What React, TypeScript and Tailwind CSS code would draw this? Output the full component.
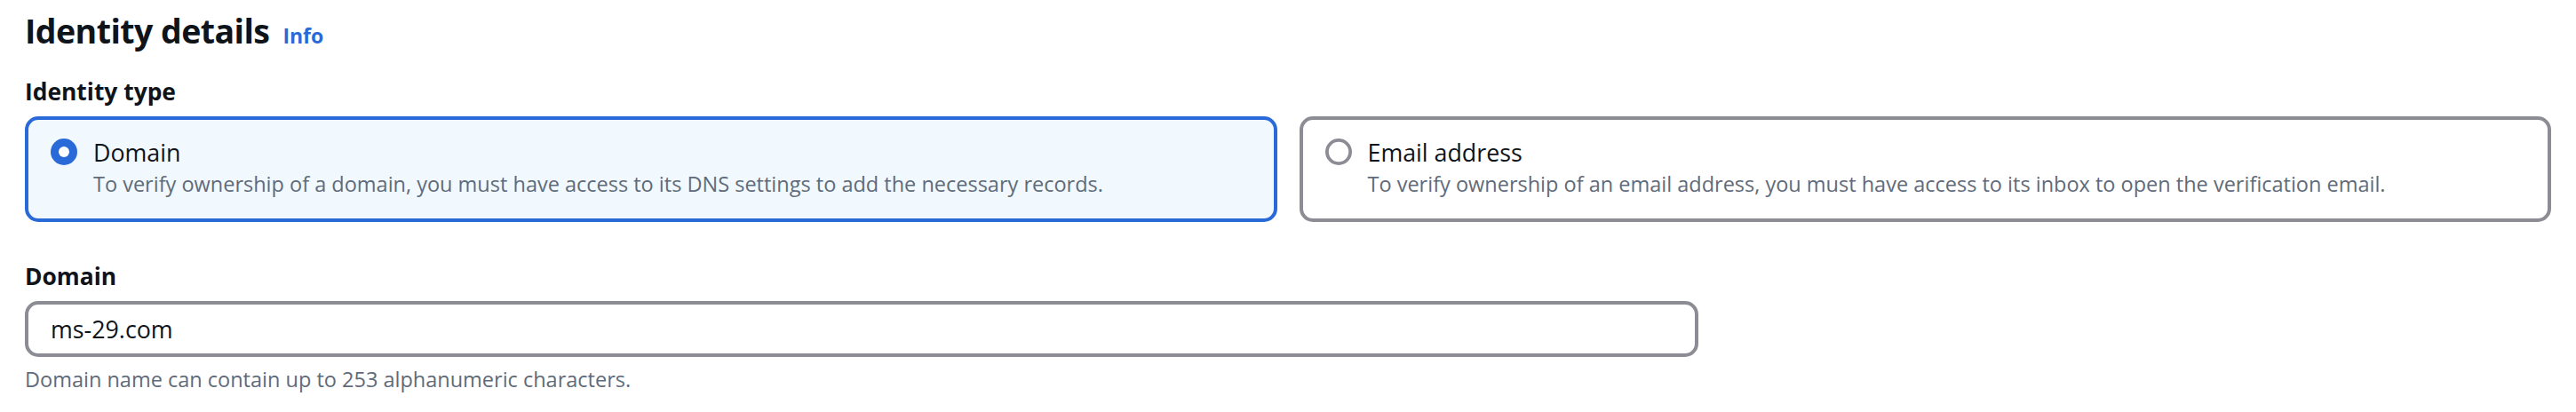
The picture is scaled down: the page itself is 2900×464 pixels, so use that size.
import React from "react";

type TileProps = {
  label: string;
  description: string;
  checked?: boolean;
};

const Radio = ({ checked }: { checked?: boolean }) => (
  <svg width="30" height="30" viewBox="0 0 30 30" className="shrink-0">
    {checked ? (
      <>
        <circle cx="15" cy="15" r="15" fill="#2a6ad8" />
        <circle cx="15" cy="15" r="6" fill="#ffffff" />
      </>
    ) : (
      <circle cx="15" cy="15" r="13.1" fill="none" stroke="#8c8c94" strokeWidth="3.8" />
    )}
  </svg>
);

const Tile = ({ label, description, checked }: TileProps) => (
  <div
    className={
      checked
        ? "flex-1 rounded-[15px] border-4 border-[#2a6ad8] bg-[#f1f9fe] pl-[25px] pt-[18px] pb-[22px]"
        : "flex-1 rounded-[15px] border-4 border-[#8c8c94] bg-white pl-[25px] pt-[18px] pb-[22px]"
    }
  >
    <div className="flex items-start gap-[18px]">
      <div className="flex h-[37px] items-center">
        <Radio checked={checked} />
      </div>
      <div className="flex flex-col">
        <span className="text-[26.8px] leading-[37px] text-[#0f141a]">{label}</span>
        <span className="text-[23.5px] leading-[34px] text-[#5f6b7a]">{description}</span>
      </div>
    </div>
  </div>
);

export default function App() {
  return (
    <div className="min-h-[464px] w-[2900px] bg-white px-[28px] pt-[13px] font-['Open_Sans',sans-serif] antialiased">
      <div className="flex items-baseline gap-[15px]">
        <h2 className="text-[37.5px] leading-[44px] font-bold tracking-[-0.015em] text-[#0f141a]">
          Identity details
        </h2>
        <a className="text-[23px] font-bold text-[#2a6ad8]">Info</a>
      </div>

      <div className="mt-[27px] text-[26.4px] leading-[37px] font-bold text-[#0f141a]">Identity type</div>
      <div className="mt-[9px] flex gap-[25px]">
        <Tile
          checked
          label="Domain"
          description="To verify ownership of a domain, you must have access to its DNS settings to add the necessary records."
        />
        <Tile
          label="Email address"
          description="To verify ownership of an email address, you must have access to its inbox to open the verification email."
        />
      </div>

      <div className="mt-[43px] text-[26.4px] leading-[37px] font-bold text-[#0f141a]">Domain</div>
      <div className="mt-[9px] flex h-[63px] w-[1884px] items-center rounded-[15px] border-4 border-[#8c8c94] bg-white px-[25px]">
        <span className="text-[26.8px] leading-[37px] text-[#0f141a]">ms-29.com</span>
      </div>
      <div className="mt-[10px] text-[23.5px] leading-[30px] text-[#5f6b7a]">
        Domain name can contain up to 253 alphanumeric characters.
      </div>
    </div>
  );
}
